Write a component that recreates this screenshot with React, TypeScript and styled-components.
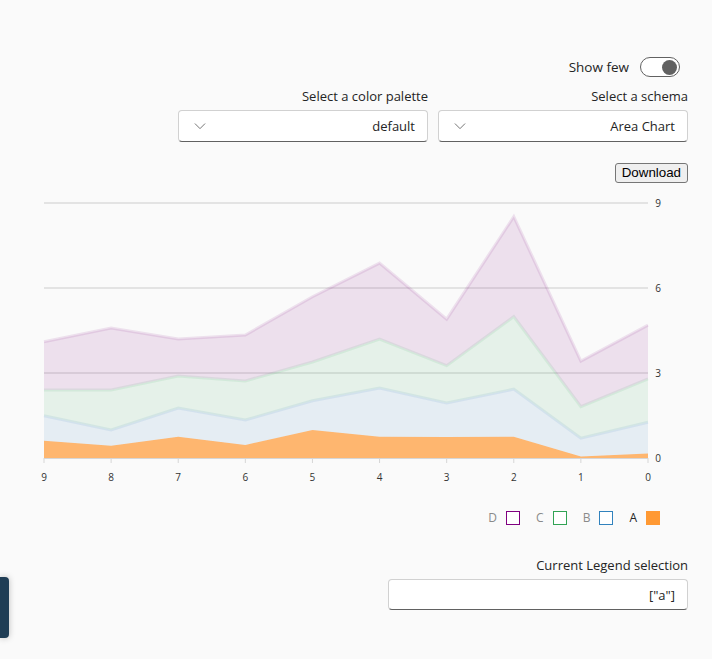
import React from 'react';
import styled, { createGlobalStyle } from 'styled-components';

const GlobalStyle = createGlobalStyle`
  html, body {
    margin: 0;
    padding: 0;
    background: #fafafa;
  }
  body {
    font-family: 'Segoe UI', 'Open Sans', 'Noto Sans', sans-serif;
    color: #242424;
  }
`;

const Page = styled.div`
  width: 712px;
  min-height: 659px;
  display: flex;
  flex-direction: column;
  align-items: stretch;
  padding-top: 56px;
  box-sizing: border-box;
`;

const Controls = styled.div`
  display: flex;
  flex-direction: column;
  align-items: flex-end;
  padding: 0 24px;
`;

const ToggleRow = styled.label`
  display: flex;
  align-items: center;
  gap: 11px;
  padding-right: 8px;
  font-size: 13.5px;
  line-height: 22px;
`;

const SwitchTrack = styled.span`
  width: 40px;
  height: 20px;
  box-sizing: border-box;
  border: 1px solid #616161;
  border-radius: 10px;
  background: #ffffff;
  display: flex;
  align-items: center;
  justify-content: flex-end;
  padding: 0 2px;
`;

const SwitchKnob = styled.span`
  width: 15px;
  height: 15px;
  border-radius: 50%;
  background: #616161;
`;

const SelectRow = styled.div`
  display: flex;
  gap: 10px;
  margin-top: 8px;
`;

const Field = styled.div<{ $width: number }>`
  width: ${(p) => p.$width}px;
  display: flex;
  flex-direction: column;
  align-items: flex-end;
  gap: 4px;
`;

const FieldLabel = styled.span`
  font-size: 13px;
  line-height: 20px;
`;

const Box = styled.div<{ $height: number }>`
  width: 100%;
  height: ${(p) => p.$height}px;
  box-sizing: border-box;
  background: #ffffff;
  border: 1px solid #d1d1d1;
  border-bottom-color: #616161;
  border-radius: 4px;
  display: flex;
  align-items: center;
  justify-content: space-between;
  padding: 0 12px 0 14px;
  font-size: 13px;
  color: #242424;
`;

const Chevron = styled.svg`
  width: 14px;
  height: 14px;
  color: #616161;
`;

const DownloadButton = styled.button`
  margin-top: 21px;
  font-family: 'Liberation Sans', Arial, sans-serif;
  font-size: 13.33px;
  line-height: 16px;
  padding: 1px 6px;
  background: #efefef;
  border: 1px solid #767676;
  border-radius: 3px;
  color: #000000;
`;

const ChartSvg = styled.svg`
  display: block;
  margin-top: 9px;
`;

const Legend = styled.div`
  display: flex;
  justify-content: flex-end;
  gap: 16px;
  padding-right: 52px;
  margin-top: 18px;
`;

const LegendItem = styled.div`
  display: flex;
  align-items: center;
  gap: 9px;
`;

const LegendText = styled.span<{ $active: boolean }>`
  font-size: 12px;
  line-height: 16px;
  color: ${(p) => (p.$active ? '#242424' : '#8a8a8a')};
`;

const LegendSwatch = styled.span<{ $color: string; $active: boolean }>`
  width: 14px;
  height: 14px;
  box-sizing: border-box;
  border: 1.5px solid ${(p) => p.$color};
  background: ${(p) => (p.$active ? p.$color : '#ffffff')};
`;

const Bottom = styled.div`
  display: flex;
  flex-direction: column;
  align-items: flex-end;
  padding: 0 24px;
  margin-top: 29px;
`;

const SideTab = styled.div`
  position: fixed;
  left: 0;
  top: 577px;
  width: 9px;
  height: 61px;
  background: #1f3d55;
  border-radius: 0 4px 4px 0;
  box-shadow: 0 0 6px rgba(0, 0, 0, 0.25);
`;

// chart geometry
const X0 = 44;
const X1 = 648;
const Y0 = 266; // value 0
const PER = 85 / 3;
const labels = [9, 8, 7, 6, 5, 4, 3, 2, 1, 0];
const step = (X1 - X0) / 9;

const series = [
  { key: 'a', name: 'A', color: '#ff9933', active: true, values: [0.61, 0.43, 0.75, 0.46, 0.99, 0.75, 0.74, 0.75, 0.05, 0.16] },
  { key: 'b', name: 'B', color: '#3182bd', active: false, values: [0.88, 0.56, 1.01, 0.88, 1.03, 1.72, 1.2, 1.68, 0.65, 1.1] },
  { key: 'c', name: 'C', color: '#31a354', active: false, values: [0.91, 1.41, 1.13, 1.38, 1.37, 1.73, 1.32, 2.56, 1.11, 1.53] },
  { key: 'd', name: 'D', color: '#800080', active: false, values: [1.7, 2.19, 1.31, 1.62, 2.3, 2.68, 1.64, 3.53, 1.61, 1.9] },
];

const xAt = (i: number) => X0 + i * step;
const yAt = (v: number) => Y0 - v * PER;

const AreaChart: React.FC = () => {
  const cum: number[][] = [];
  series.forEach((s, si) => {
    cum.push(s.values.map((v, i) => v + (si > 0 ? cum[si - 1][i] : 0)));
  });

  const bands = series.map((s, si) => {
    const top = cum[si].map((v, i) => `${xAt(i)},${yAt(v)}`);
    const bottom = (si > 0 ? cum[si - 1] : s.values.map(() => 0))
      .map((v, i) => `${xAt(i)},${yAt(v)}`)
      .reverse();
    return { s, area: [...top, ...bottom].join(' '), line: top.join(' ') };
  });

  return (
    <ChartSvg width={712} height={300}>
      {[9, 6, 3].map((v) => (
        <line key={v} x1={X0} x2={X1} y1={yAt(v)} y2={yAt(v)} stroke="#cccccc" strokeWidth={1} />
      ))}
      {bands.map(({ s, area, line }) => (
        <g key={s.key}>
          <polygon points={area} fill={s.color} fillOpacity={s.active ? 0.7 : 0.1} />
          {!s.active && (
            <polyline points={line} fill="none" stroke={s.color} strokeOpacity={0.1} strokeWidth={3} />
          )}
        </g>
      ))}
      <line x1={X0} x2={X1} y1={Y0 + 0.5} y2={Y0 + 0.5} stroke="#d6d6d6" strokeWidth={1} />
      {labels.map((l, i) => (
        <g key={l}>
          <line x1={xAt(i)} x2={xAt(i)} y1={Y0} y2={Y0 + 5} stroke="#d6d6d6" strokeWidth={1} />
          <text
            x={xAt(i)}
            y={Y0 + 23}
            fontSize={10}
            textAnchor="middle"
            fill="#333333"
            fontFamily="'Segoe UI', 'Open Sans', sans-serif"
          >
            {l}
          </text>
        </g>
      ))}
      {[9, 6, 3, 0].map((v) => (
        <text
          key={v}
          x={X1 + 10}
          y={yAt(v) + 3.5}
          fontSize={10}
          textAnchor="middle"
          fill="#333333"
          fontFamily="'Segoe UI', 'Open Sans', sans-serif"
        >
          {v}
        </text>
      ))}
    </ChartSvg>
  );
};

const ChevronDown: React.FC = () => (
  <Chevron viewBox="0 0 16 16" fill="none">
    <path d="M2.5 5.5 L8 11 L13.5 5.5" stroke="currentColor" strokeWidth={1} strokeLinecap="round" strokeLinejoin="round" />
  </Chevron>
);

const App: React.FC = () => {
  const legendOrder = [...series].reverse();
  return (
    <>
      <GlobalStyle />
      <Page>
        <Controls>
          <ToggleRow>
            Show few
            <SwitchTrack>
              <SwitchKnob />
            </SwitchTrack>
          </ToggleRow>
          <SelectRow>
            <Field $width={250}>
              <FieldLabel>Select a color palette</FieldLabel>
              <Box $height={32}>
                <ChevronDown />
                <span>default</span>
              </Box>
            </Field>
            <Field $width={250}>
              <FieldLabel>Select a schema</FieldLabel>
              <Box $height={32}>
                <ChevronDown />
                <span>Area Chart</span>
              </Box>
            </Field>
          </SelectRow>
          <DownloadButton>Download</DownloadButton>
        </Controls>
        <AreaChart />
        <Legend>
          {legendOrder.map((s) => (
            <LegendItem key={s.key}>
              <LegendText $active={s.active}>{s.name}</LegendText>
              <LegendSwatch $color={s.color} $active={s.active} />
            </LegendItem>
          ))}
        </Legend>
        <Bottom>
          <Field $width={300}>
            <FieldLabel>Current Legend selection</FieldLabel>
            <Box $height={31}>
              <span />
              <span>["a"]</span>
            </Box>
          </Field>
        </Bottom>
        <SideTab />
      </Page>
    </>
  );
};

export default App;
